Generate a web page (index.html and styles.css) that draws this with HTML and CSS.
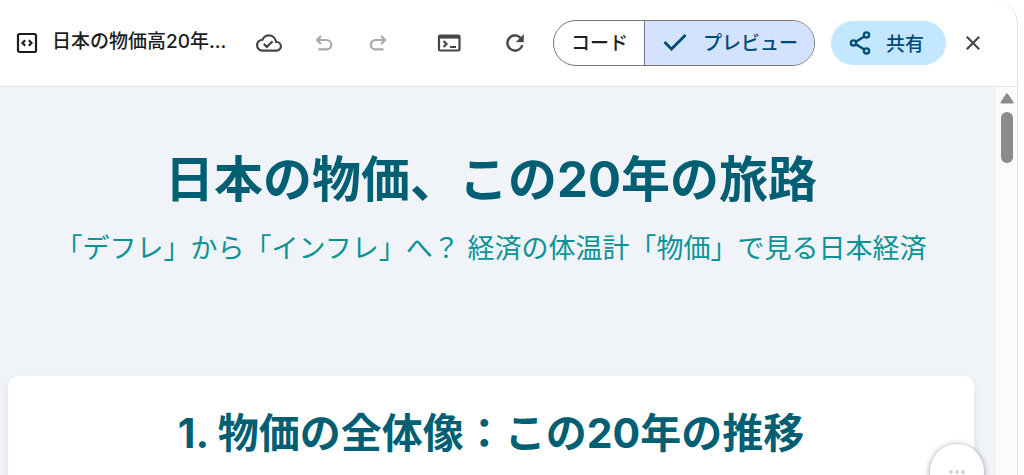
FILE: index.html
```html
<!DOCTYPE html>
<html lang="ja">
<head>
<meta charset="utf-8">
<meta name="viewport" content="width=device-width, initial-scale=1">
<title>日本の物価高20年</title>
<link rel="stylesheet" href="styles.css">
</head>
<body>
<div class="panel">
  <header class="toolbar">
    <div class="doc">
      <svg class="doc-icon" viewBox="0 0 22 22" fill="none" stroke="currentColor" stroke-width="2.2"><rect x="2" y="2" width="18" height="18" rx="1.5"/><path d="M9.2 8.300 6.500 11l2.700 2.700M12.800 8.300l2.700 2.700-2.700 2.700"/></svg>
      <span class="doc-title">日本の物価高20年...</span>
    </div>
    <button class="icon-btn saved" aria-label="保存済み"><svg width="26" height="26" viewBox="0 0 24 24" fill="currentColor"><path d="M19.350 10.040A7.490 7.490 0 0 0 12 4C9.110 4 6.600 5.640 5.350 8.040A5.994 5.994 0 0 0 0 14c0 3.310 2.690 6 6 6h13c2.760 0 5-2.240 5-5 0-2.640-2.050-4.780-4.650-4.960zM19 18H6c-2.210 0-4-1.790-4-4 0-2.050 1.530-3.760 3.560-3.970l1.070-.110.500-.950A5.469 5.469 0 0 1 12 6c2.620 0 4.880 1.860 5.390 4.430l.300 1.500 1.530.110A2.980 2.980 0 0 1 22 15c0 1.650-1.350 3-3 3zm-9-3.820-2.090-2.090L6.500 13.500 10 17l6.010-6.010-1.410-1.410z"/></svg></button>
    <button class="icon-btn undo" aria-label="元に戻す" disabled><svg width="22" height="22" viewBox="0 0 22 22" fill="none" stroke="currentColor" stroke-width="2.2"><path d="M8 4 4 8l4 4M4 8h9.500a4.700 4.700 0 0 1 0 9.400H5.500"/></svg></button>
    <button class="icon-btn redo" aria-label="やり直す" disabled><svg width="22" height="22" viewBox="0 0 22 22" fill="none" stroke="currentColor" stroke-width="2.2"><path d="m14 4 4 4-4 4M18 8H8.500a4.700 4.700 0 0 0 0 9.400h8"/></svg></button>
    <button class="icon-btn console" aria-label="コンソール"><svg width="26" height="22" viewBox="0 0 26 22" fill="none" stroke="currentColor" stroke-width="2.2"><rect x="3" y="3.500" width="20.500" height="15" rx="1"/><path d="M3 4.800h20" stroke-width="3.600"/><path d="m7.500 9 3 3-3 3M14 15h6"/></svg></button>
    <button class="icon-btn reload" aria-label="再読み込み"><svg width="26" height="26" viewBox="0 0 24 24" fill="currentColor" stroke="currentColor" stroke-width=".3"><path d="M17.650 6.350A7.958 7.958 0 0 0 12 4a8 8 0 1 0 7.730 10h-2.080A5.990 5.990 0 0 1 12 18a6 6 0 1 1 0-12c1.660 0 3.140.690 4.220 1.780L13 11h7V4z"/></svg></button>
    <div class="segments">
      <button class="segment">コード</button>
      <button class="segment selected" aria-pressed="true"><svg width="26" height="20" viewBox="0 0 26 20" fill="none" stroke="currentColor" stroke-width="2.8"><path d="m2.500 10 7 7L23.500 3"/></svg>プレビュー</button>
    </div>
    <button class="share"><svg width="22" height="24" viewBox="0 0 22 24" fill="none" stroke="currentColor" stroke-width="2.3"><circle cx="4.500" cy="12" r="2.600"/><circle cx="17.500" cy="4" r="2.600"/><circle cx="17.500" cy="20" r="2.600"/><path d="m6.800 10.700 8.500-5.300M6.800 13.300l8.500 5.300"/></svg>共有</button>
    <button class="icon-btn close" aria-label="閉じる"><svg width="16" height="16" viewBox="0 0 16 16" fill="none" stroke="currentColor" stroke-width="2.2"><path d="m1.800 1.800 12.400 12.400M14.200 1.800 1.800 14.200"/></svg></button>
  </header>
  <div class="viewport">
    <main class="page">
      <div class="hero">
        <h1 class="hero-title">日本の物価、この20年の旅路</h1>
        <p class="hero-sub">「デフレ」から「インフレ」へ？ 経済の体温計「物価」で見る日本経済</p>
      </div>
      <section class="card">
        <h2 class="card-title">1. 物価の全体像：この20年の推移</h2>
      </section>
      <button class="more" aria-label="その他"><i class="dot"></i><i class="dot"></i><i class="dot"></i></button>
    </main>
    <div class="scrollbar">
      <svg width="14" height="11" viewBox="0 0 14 11" fill="#8b8b8b"><path d="M7.900.700 13.200 8.700Q14 10.500 12.500 10.500H1.500Q0 10.500.800 8.700L6.100.700Q7-.400 7.900.700z"/></svg>
      <div class="thumb"></div>
    </div>
  </div>
</div>
</body>
</html>
```
FILE: styles.css
```css
* { box-sizing: border-box; }

body {
  margin: 0;
  height: 100vh;
  overflow: hidden;
  background: #fff;
  font-family: Inter, "Noto Sans CJK JP", sans-serif;
}

button {
  margin: 0;
  padding: 0;
  border: 0;
  background: none;
  color: inherit;
  font: inherit;
}

svg { display: block; flex: none; }

.panel {
  display: flex;
  flex-direction: column;
  height: 100vh;
  margin-right: 6px;
  border-right: 1px solid #e0e2e5;
  border-top-right-radius: 24px;
  overflow: hidden;
}

.toolbar {
  flex: none;
  display: flex;
  align-items: center;
  height: 87px;
  padding: 0 36px 1px 16px;
  border-bottom: 1px solid #e1e4e8;
  color: #444746;
}

.doc {
  display: flex;
  flex: 1;
  align-items: center;
  gap: 14px;
  min-width: 0;
  color: #1b1c1d;
}

.doc-icon { width: 22px; height: 22px; }

.doc-title {
  font-size: 19px;
  font-weight: 500;
  line-height: 26px;
  padding-bottom: 2px;
  white-space: nowrap;
}

.icon-btn {
  display: flex;
  flex: none;
}

.icon-btn:disabled { color: #a9abaa; }

.undo { margin-left: 31px; }
.redo { margin-left: 32px; }
.console { margin-left: 47px; }
.reload { margin-left: 40px; }

.segments {
  display: flex;
  flex: none;
  height: 46px;
  margin-left: 25px;
  border: 1px solid #747775;
  border-radius: 23px;
  overflow: hidden;
  color: #1f1f1f;
  font-size: 19px;
  font-weight: 500;
}

.segment {
  display: flex;
  align-items: center;
  gap: 15px;
  padding: 0 16px 2px 17px;
  white-space: nowrap;
}

.selected {
  border-left: 1px solid #747775;
  background: #d3e3fd;
  color: #004a77;
}

.share {
  display: flex;
  flex: none;
  align-items: center;
  gap: 15px;
  height: 44px;
  margin-left: 16px;
  padding: 0 22px 0 18px;
  border-radius: 22px;
  background: #c2e7ff;
  color: #004a77;
  font-size: 19px;
  font-weight: 500;
}

.close { margin-left: 19px; }

.viewport {
  display: flex;
  flex: 1;
  min-height: 0;
}

.page {
  position: relative;
  flex: 1;
  padding: 0 22px 0 8px;
  background: #f0f3f8;
  overflow: hidden;
}

.hero {
  padding-top: 57px;
  text-align: center;
}

.hero-title {
  margin: 0;
  color: #005f73;
  font-size: 49px;
  font-weight: 700;
  line-height: 72px;
}

.hero-sub {
  margin: 13px 0 0;
  color: #0a9396;
  font-size: 27px;
  font-weight: 400;
  line-height: 40px;
  white-space: nowrap;
}

.card {
  height: 400px;
  margin-top: 107px;
  padding-top: 27px;
  border-radius: 10px;
  background: #fff;
  box-shadow: 0 5px 10px rgba(0, 0, 0, 0.08);
}

.card-title {
  margin: 0;
  color: #005f73;
  font-size: 41px;
  font-weight: 700;
  line-height: 60px;
  text-align: center;
}

.more {
  position: absolute;
  right: 12px;
  bottom: -24px;
  display: flex;
  align-items: center;
  justify-content: center;
  gap: 2px;
  width: 54px;
  height: 55px;
  border-radius: 50%;
  background: #fff;
  box-shadow: 0 1px 6px rgba(0, 0, 0, 0.4);
}

.dot {
  width: 4px;
  height: 4px;
  border-radius: 50%;
  background: #d2d2d2;
}

.scrollbar {
  display: flex;
  flex: none;
  flex-direction: column;
  align-items: center;
  gap: 8px;
  width: 21px;
  padding-top: 6px;
  background: #fbfbfb;
}

.thumb {
  width: 12px;
  height: 51px;
  border-radius: 6px;
  background: #8b8b8b;
}
```
